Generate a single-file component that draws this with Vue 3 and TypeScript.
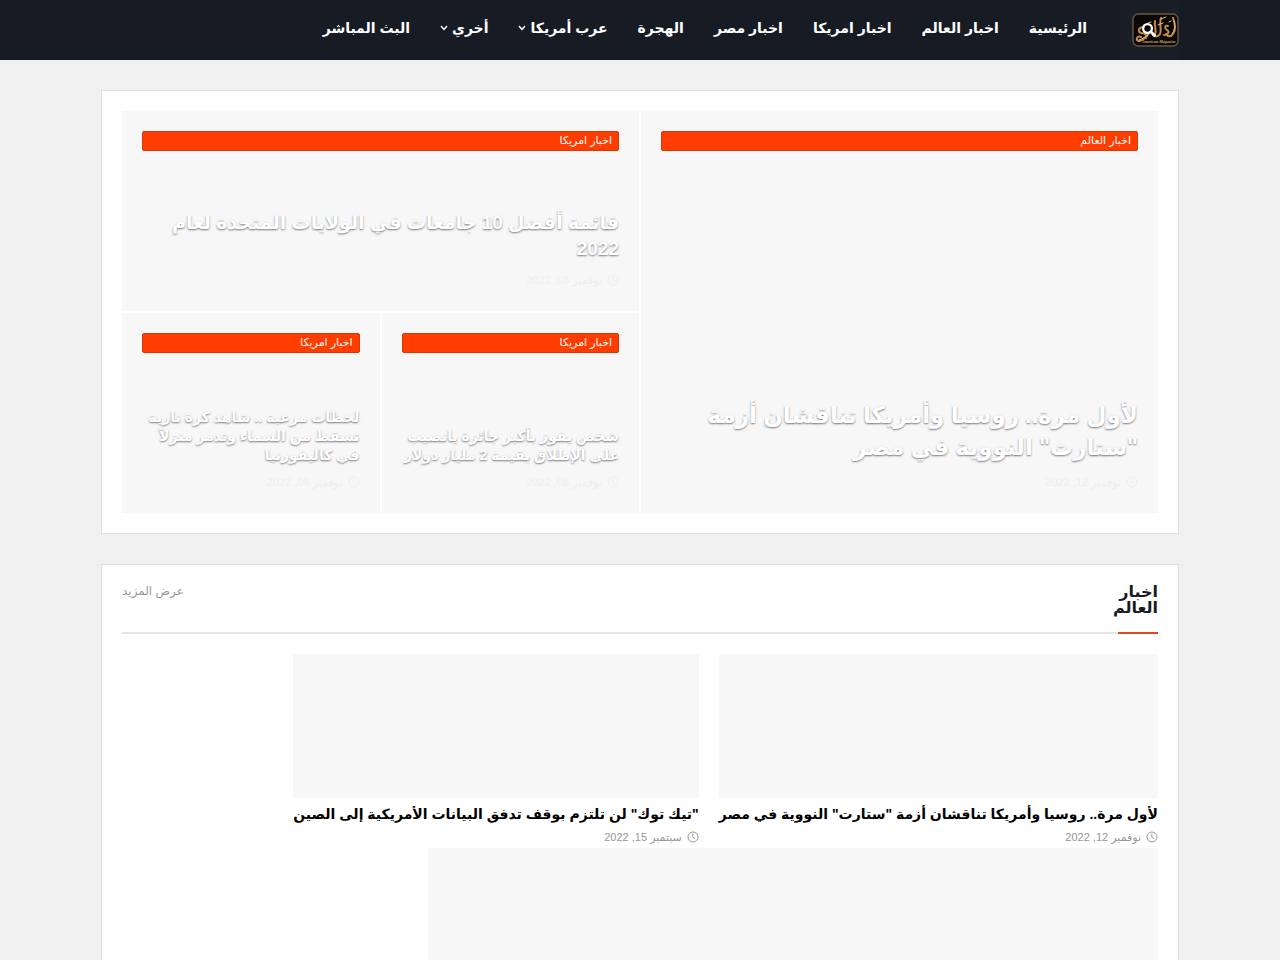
<script setup lang="ts">
interface NavItem { label: string; menu?: boolean }
interface Post { category?: string; title: string; date: string; size: string }

const nav: NavItem[] = [
  { label: 'الرئيسية' },
  { label: 'اخبار العالم' },
  { label: 'اخبار امريكا' },
  { label: 'اخبار مصر' },
  { label: 'الهجرة' },
  { label: 'عرب أمريكا', menu: true },
  { label: 'أخري', menu: true },
  { label: 'البث المباشر' },
]

const featured: Post[] = [
  { category: 'اخبار العالم', title: 'لأول مرة.. روسيا وأمريكا تناقشان أزمة "ستارت" النووية في مصر', date: 'نوفمبر 12, 2022', size: 'large' },
  { category: 'اخبار امريكا', title: 'قائمة أفضل 10 جامعات في الولايات المتحدة لعام 2022', date: 'نوفمبر 08, 2022', size: 'wide' },
  { category: 'اخبار امريكا', title: 'شخص يفوز بأكبر جائزة يانصيب على الإطلاق بقيمة 2 مليار دولار', date: 'نوفمبر 08, 2022', size: 'small' },
  { category: 'اخبار امريكا', title: 'لحظات مرعبة .. شاهد كرة نارية تسقط من السماء وتدمر منزلاً في كاليفورنيا', date: 'نوفمبر 08, 2022', size: 'small' },
]

const posts: Post[] = [
  { title: 'لأول مرة.. روسيا وأمريكا تناقشان أزمة "ستارت" النووية في مصر', date: 'نوفمبر 12, 2022', size: 'normal' },
  { title: '"تيك توك" لن تلتزم بوقف تدفق البيانات الأمريكية إلى الصين', date: 'سبتمبر 15, 2022', size: 'normal' },
]
</script>

<template>
  <div class="page" dir="rtl" lang="ar">
    <header class="header">
      <div class="container bar">
        <div class="brand">
          <a class="logo" href="#" aria-label="American Magazine">
            <svg viewBox="0 0 47 34" width="47" height="34" aria-hidden="true">
              <rect x="1" y="1" width="45" height="32" rx="5" fill="#070605" stroke="#66573a" stroke-width="1.4" />
              <g fill="none" stroke="#c48a42" stroke-width="2" stroke-linecap="round" stroke-linejoin="round">
                <path d="M41 5C43 10 44 17 41 21C39 24 36 24 34 21" />
                <path d="M36 13C33 12 32 15 35 17C38 19 36 22 32 22" />
                <path d="M29 5C27 10 30 17 28 21C26 24 23 24 21 22" />
                <path d="M23 8C22 13 25 17 23 21" />
                <path d="M17 20C14 25 8 30 5 27C4 24 7 23 9 24" />
                <path d="M12 14C7 14 5 18 9 20C13 20 15 22 14 25" />
              </g>
              <g fill="none" stroke="#e8bd72" stroke-width="1" stroke-linecap="round">
                <path d="M29 6L34 4M26 12L31 10M37 9L39 8M16 10L19 9" />
                <path d="M42 8C43 13 43 18 40 21M7 27C11 26 14 23 17 21" />
              </g>
              <text x="10" y="30" class="logo-text">American Magazine</text>
            </svg>
          </a>
          <button class="search" type="button" aria-label="بحث">
            <svg viewBox="0 0 16 16" width="16" height="16" aria-hidden="true">
              <circle cx="6.5" cy="6.5" r="4.4" fill="none" stroke="#fff" stroke-width="2.3" />
              <path d="M9.8 9.8L13.5 13.5" stroke="#fff" stroke-width="2.8" stroke-linecap="round" />
            </svg>
          </button>
        </div>
        <nav class="nav">
          <a v-for="item in nav" :key="item.label" href="#">
            {{ item.label }}
            <svg v-if="item.menu" class="chevron" viewBox="0 0 8 6" width="8" height="6" aria-hidden="true">
              <path d="M1 1L4 4.4L7 1" fill="none" stroke="currentColor" stroke-width="1.5" />
            </svg>
          </a>
        </nav>
      </div>
    </header>

    <main class="container main">
      <section class="panel featured">
        <article v-for="post in featured" :key="post.title" class="tile" :class="post.size">
          <a class="tag" href="#">{{ post.category }}</a>
          <div class="info">
            <h2><a href="#">{{ post.title }}</a></h2>
            <div class="date">
              <svg viewBox="0 0 12 12" width="12" height="12" aria-hidden="true">
                <circle cx="6" cy="6" r="5" />
                <path d="M5.8 2.8V6L7.8 8" />
              </svg>
              <time>{{ post.date }}</time>
            </div>
          </div>
        </article>
      </section>

      <section class="panel news">
        <div class="heading">
          <h3>اخبار العالم</h3>
          <a href="#">عرض المزيد</a>
        </div>
        <div class="posts">
          <article v-for="post in posts" :key="post.title" class="post">
            <a class="thumb" href="#" :aria-label="post.title"></a>
            <h2><a href="#">{{ post.title }}</a></h2>
            <div class="date">
              <svg viewBox="0 0 12 12" width="12" height="12" aria-hidden="true">
                <circle cx="6" cy="6" r="5" />
                <path d="M5.8 2.8V6L7.8 8" />
              </svg>
              <time>{{ post.date }}</time>
            </div>
          </article>
          <article class="post lead">
            <div class="thumb"></div>
          </article>
        </div>
      </section>
    </main>
  </div>
</template>

<style>
body {
  background: #f0f0f0;
}
</style>

<style scoped>
.page {
  font-family: "Liberation Sans", "DejaVu Sans", sans-serif;
  font-size: 14px;
  color: #171c24;
}
.page * {
  box-sizing: border-box;
}
a {
  color: inherit;
  text-decoration: none;
}
h2, h3 {
  margin: 0;
}
.container {
  max-width: 1078px;
  margin: 0 auto;
}
.header {
  background: #171c24;
}
.bar {
  display: flex;
  height: 60px;
}
.brand {
  position: relative;
  width: 77px;
  flex: none;
}
.logo {
  display: block;
  width: 47px;
  padding-top: 13px;
}
.logo svg {
  display: block;
}
.logo-text {
  font: italic 700 4px "Liberation Serif", serif;
  fill: #d6a75c;
  direction: ltr;
}
.search {
  position: absolute;
  top: 0;
  right: 0;
  width: 60px;
  height: 60px;
  padding: 0;
  border: 0;
  background: rgba(255, 255, 255, 0.01);
  display: grid;
  place-items: center;
}
.nav {
  display: flex;
}
.nav a {
  display: flex;
  align-items: center;
  gap: 4px;
  height: 56px;
  padding: 0 15px;
  color: #fff;
  font-weight: 700;
  white-space: nowrap;
}
.main {
  padding-top: 30px;
}
.panel {
  background: #fff;
  border: 1px solid #dedede;
  padding: 20px;
  margin-bottom: 30px;
}
.featured {
  display: grid;
  grid-template-columns: repeat(4, 1fr);
  grid-template-rows: 200px 200px;
  gap: 2px;
}
.tile {
  display: flex;
  flex-direction: column;
  justify-content: space-between;
  padding: 20px;
  background: #f7f7f7;
}
.large {
  grid-row: span 2;
  grid-column: span 2;
}
.wide {
  grid-column: span 2;
}
.tag {
  height: 20px;
  padding: 0 6px;
  border: 1px solid #d43a08;
  border-radius: 2px;
  background: #ff3d00;
  color: #fff;
  font-size: 11px;
  line-height: 16px;
}
.tile h2 {
  color: #fff;
  font-size: 14px;
  line-height: 19px;
  text-shadow: 0 1px 2px rgba(0, 0, 0, 0.5);
}
.tile.wide h2 {
  font-size: 19px;
  line-height: 26px;
}
.tile.large h2 {
  font-size: 23px;
  line-height: 32px;
}
.date {
  display: flex;
  align-items: center;
  gap: 5px;
  color: #979797;
  font-size: 11px;
  line-height: 14px;
}
.date svg {
  fill: none;
  stroke: currentColor;
}
.tile .date {
  margin: 11px 0 4px;
  color: #eee;
}
.tile.small .date {
  margin-top: 10px;
}
.tile.large .date {
  margin-top: 12px;
}
.news {
  padding-bottom: 20px;
}
.heading {
  display: flex;
  justify-content: space-between;
  height: 50px;
  border-bottom: 2px solid #e4e4e4;
  margin: -1px 0 20px;
}
.heading h3 {
  position: relative;
  width: 40px;
  font-size: 16px;
  line-height: 16px;
}
.heading h3::after {
  content: "";
  position: absolute;
  right: 0;
  bottom: -2px;
  width: 40px;
  height: 2px;
  background: #e14a1c;
}
.heading a {
  color: #979797;
  font-size: 12px;
  line-height: 14px;
}
.posts {
  display: flex;
  flex-wrap: wrap;
  column-gap: 20px;
}
.thumb {
  display: block;
  height: 144px;
  background: #f7f7f7;
}
.post h2 {
  margin: 7px 0;
  font-size: 14px;
  line-height: 18px;
  color: #000;
}
.post .date {
  margin-bottom: 4px;
}
.lead {
  width: 730px;
  max-width: 100%;
}
.lead .thumb {
  height: 260px;
}
</style>
